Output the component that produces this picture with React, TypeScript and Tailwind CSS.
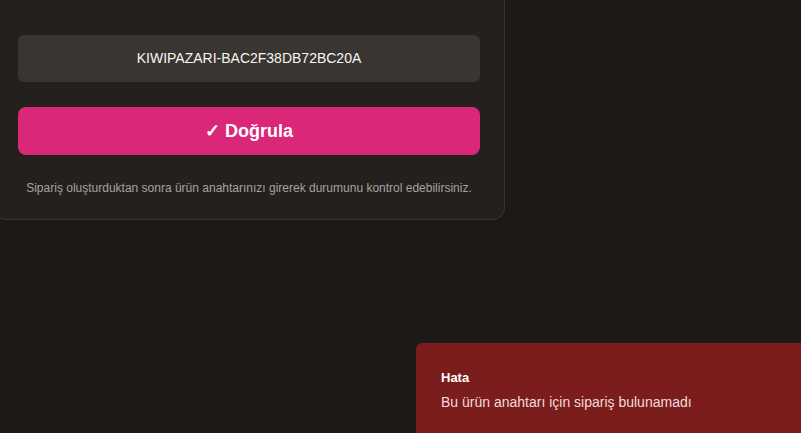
export default function App() {
  return (
    <div className="relative h-[433px] w-[801px] overflow-hidden bg-[#1c1917] font-['Liberation_Sans',Arial,sans-serif]">
      <div className="-ml-[7px] -mt-[10px] w-[512px] rounded-b-xl border border-[#38332f] bg-[#23201d] px-6 pt-[44px] pb-[22px]">
        <div className="flex h-[47px] items-center justify-center rounded-md bg-[#3a3531] text-[14px] text-[#f5f5f4]">
          KIWIPAZARI-BAC2F38DB72BC20A
        </div>
        <button className="mt-[25px] flex h-[48px] w-full items-center justify-center rounded-lg bg-[#db2777] text-[18px] font-bold text-white">
          ✓ Doğrula
        </button>
        <p className="mt-[24px] text-center text-[12px] text-[#a8a29e]">
          Sipariş oluşturduktan sonra ürün anahtarınızı girerek durumunu kontrol edebilirsiniz.
        </p>
      </div>

      <div className="absolute left-[416px] top-[343px] h-[120px] w-[420px] rounded-md bg-[#7c1d1d] px-[25px] pt-[25px]">
        <p className="text-[13px] font-bold text-white">Hata</p>
        <p className="mt-[4px] text-[14px] text-[#f3dada]">Bu ürün anahtarı için sipariş bulunamadı</p>
      </div>
    </div>
  );
}
